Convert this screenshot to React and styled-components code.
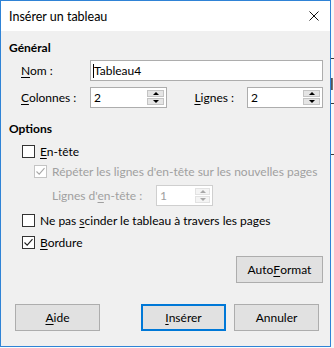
import React from 'react';
import styled, { createGlobalStyle } from 'styled-components';

const GlobalStyle = createGlobalStyle`
  html, body {
    margin: 0;
    padding: 0;
    background: #ffffff;
  }
  body {
    font-family: 'Segoe UI', Lato, 'Noto Sans', sans-serif;
    font-size: 12px;
    color: #000;
    white-space: nowrap;
  }
`;

const Page = styled.div`
  display: flex;
  width: 334px;
  height: 348px;
  background: #fbfbfb;
`;

const Window = styled.div`
  display: flex;
  flex-direction: column;
  width: 331px;
  height: 347px;
  box-sizing: border-box;
  border: 1px solid #2f83d6;
  background: #f0f0f0;
`;

const BehindStrip = styled.div`
  flex: 1;
  background:
    linear-gradient(#3a3a3a, #3a3a3a) 0 58px / 100% 1px no-repeat,
    linear-gradient(#555, #555) 0 78px / 60% 12px no-repeat,
    linear-gradient(#3a3a3a, #3a3a3a) 0 103px / 100% 1px no-repeat,
    linear-gradient(#3a3a3a, #3a3a3a) 0 154px / 100% 1px no-repeat,
    #f7f7f7;
`;

const TitleBar = styled.div`
  display: flex;
  align-items: center;
  justify-content: space-between;
  height: 30px;
  padding: 0 11px 0 8px;
  background: #ffffff;
  font-size: 12.5px;
`;

const Content = styled.div`
  display: flex;
  flex-direction: column;
  flex: 1;
  padding: 9px 7px 15px 8px;
`;

const SectionTitle = styled.div`
  font-weight: bold;
  height: 16px;
  line-height: 16px;
  margin-top: ${(p) => p.$top || 0}px;
`;

const FieldRow = styled.div`
  display: flex;
  align-items: center;
  height: 21px;
  padding-left: ${(p) => p.$indent || 12}px;
  margin-top: ${(p) => p.$top || 0}px;
`;

const Label = styled.span`
  width: ${(p) => (p.$width ? `${p.$width}px` : 'auto')};
  flex-shrink: 0;
  margin-right: ${(p) => p.$gap || 0}px;
  color: ${(p) => (p.$disabled ? '#a0a0a0' : '#000')};
`;

const Spacer = styled.div`
  flex: 1;
`;

const TextBox = styled.div`
  flex: 1;
  height: 21px;
  box-sizing: border-box;
  border: 1px solid #adadad;
  background: #fff;
  display: flex;
  align-items: center;
  padding-left: 2px;
`;

const Caret = styled.span`
  display: inline-block;
  width: 1px;
  height: 14px;
  background: #000;
`;

const SpinWrap = styled.div`
  display: flex;
  align-items: center;
  width: ${(p) => p.$width}px;
  height: 21px;
  box-sizing: border-box;
  border: 1px solid ${(p) => (p.$disabled ? '#cfcfcf' : '#adadad')};
  background: #fff;
  padding: 2px;
  color: ${(p) => (p.$disabled ? '#a0a0a0' : '#000')};
`;

const SpinValue = styled.span`
  flex: 1;
  padding-left: 1px;
`;

const SpinButtons = styled.div`
  display: flex;
  flex-direction: column;
  gap: 1px;
  width: ${(p) => (p.$disabled ? 15 : 17)}px;
  height: 15px;
`;

const SpinButton = styled.div`
  flex: 1;
  display: flex;
  align-items: center;
  justify-content: center;
  background: ${(p) => (p.$disabled ? '#f4f4f4' : '#e5e5e5')};
  border: 1px solid ${(p) => (p.$disabled ? '#e2e2e2' : '#c4c4c4')};
  box-sizing: border-box;
`;

const Arrow = styled.span`
  width: 0;
  height: 0;
  border-left: 3px solid transparent;
  border-right: 3px solid transparent;
  ${(p) =>
    p.$down
      ? `border-top: 3px solid ${p.$disabled ? '#a8a8a8' : '#000'};`
      : `border-bottom: 3px solid ${p.$disabled ? '#a8a8a8' : '#000'};`}
`;

const CheckRow = styled.div`
  display: flex;
  align-items: center;
  height: 20px;
  padding-left: ${(p) => p.$indent || 13}px;
  margin-top: ${(p) => p.$top || 0}px;
  color: ${(p) => (p.$disabled ? '#a0a0a0' : '#000')};
`;

const Box = styled.span`
  display: flex;
  align-items: center;
  justify-content: center;
  width: 13px;
  height: 13px;
  box-sizing: border-box;
  border: 1px solid ${(p) => (p.$disabled ? '#c4c4c4' : '#333')};
  background: #fff;
  margin-right: 5px;
`;

const U = styled.span`
  text-decoration: underline;
  text-underline-offset: 2px;
`;

const ButtonRow = styled.div`
  display: flex;
  align-items: center;
  justify-content: ${(p) => p.$justify || 'flex-start'};
  margin-top: ${(p) => p.$top || 0}px;
  padding: ${(p) => p.$pad || '0'};
`;

const Button = styled.div`
  display: flex;
  align-items: center;
  justify-content: center;
  width: ${(p) => p.$width || 85}px;
  height: 27px;
  box-sizing: border-box;
  background: #e1e1e1;
  border: ${(p) => (p.$default ? '2px solid #0078d7' : '1px solid #adadad')};
  margin-left: ${(p) => p.$left || 0}px;
`;

function Check({ disabled }) {
  return (
    <svg width="11" height="11" viewBox="0 0 11 11">
      <path d="M1.5 5.5 L4.2 8.2 L9.5 2.2" fill="none" stroke={disabled ? '#a8a8a8' : '#222'} strokeWidth="1.1" />
    </svg>
  );
}

function Spin({ value, width, disabled }) {
  return (
    <SpinWrap $width={width} $disabled={disabled}>
      <SpinValue>{value}</SpinValue>
      <SpinButtons $disabled={disabled}>
        <SpinButton $disabled={disabled}><Arrow $disabled={disabled} /></SpinButton>
        <SpinButton $disabled={disabled}><Arrow $down $disabled={disabled} /></SpinButton>
      </SpinButtons>
    </SpinWrap>
  );
}

export default function App() {
  return (
    <Page>
      <GlobalStyle />
      <Window>
        <TitleBar>
          <span>Insérer un tableau</span>
          <svg width="10" height="10" viewBox="0 0 10 10">
            <path d="M0.5 0.5 L9.5 9.5 M9.5 0.5 L0.5 9.5" stroke="#111" strokeWidth="1" />
          </svg>
        </TitleBar>
        <Content>
          <SectionTitle>Général</SectionTitle>
          <FieldRow $top={4}>
            <Label $width={69}><U>N</U>om :</Label>
            <TextBox><Caret />Tableau4</TextBox>
          </FieldRow>
          <FieldRow $top={6}>
            <Label $width={69}><U>C</U>olonnes :</Label>
            <Spin value="2" width={77} />
            <Spacer />
            <Label $gap={13}><U>L</U>ignes :</Label>
            <Spin value="2" width={76} />
          </FieldRow>

          <SectionTitle $top={13}>Options</SectionTitle>
          <CheckRow $top={4}>
            <Box />
            <span><U>E</U>n-tête</span>
          </CheckRow>
          <CheckRow $indent={25} $disabled>
            <Box $disabled><Check disabled /></Box>
            <span>Répéter les lignes d'en-tête sur les nouvelles pages</span>
          </CheckRow>
          <FieldRow $top={4} $indent={43}>
            <Label $width={104} $disabled>Lignes d'<U>e</U>n-tête :</Label>
            <Spin value="1" width={57} disabled />
          </FieldRow>
          <CheckRow $top={4}>
            <Box />
            <span>Ne pas <U>s</U>cinder le tableau à travers les pages</span>
          </CheckRow>
          <CheckRow $top={2}>
            <Box><Check /></Box>
            <span><U>B</U>ordure</span>
          </CheckRow>

          <ButtonRow $justify="flex-end" $top={4}>
            <Button $width={87}>Auto<U>F</U>ormat</Button>
          </ButtonRow>
          <Spacer />
          <ButtonRow $pad="0 0 0 6px">
            <Button><U>A</U>ide</Button>
            <Button $default $left={41}><U>I</U>nsérer</Button>
            <Button $left={8}>Annuler</Button>
          </ButtonRow>
        </Content>
      </Window>
      <BehindStrip />
    </Page>
  );
}
